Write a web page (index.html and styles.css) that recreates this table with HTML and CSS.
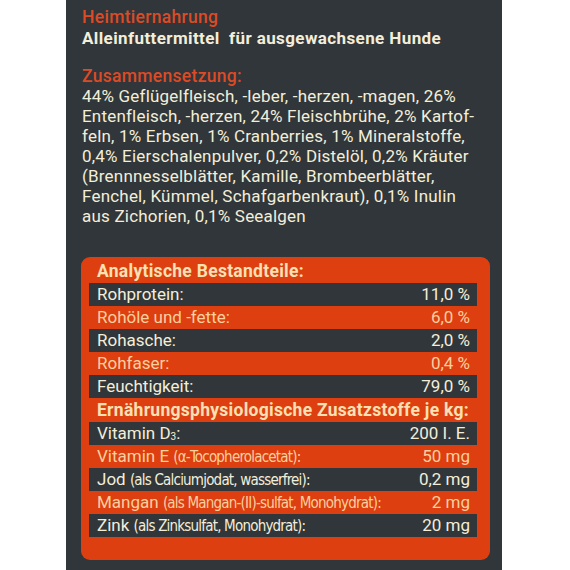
FILE: index.html
```html
<!DOCTYPE html>
<html lang="de">
<head>
    <meta charset="UTF-8">
    <title>Heimtiernahrung</title>
    <link rel="stylesheet" href="styles.css">
</head>
<body>

<div class="label">
    <p class="heading">Heimtiernahrung</p>
    <p class="subtitle">Alleinfuttermittel&nbsp; für ausgewachsene Hunde</p>

    <p class="heading section">Zusammensetzung:</p>
    <p class="ingredients">
        44% Geflügelfleisch, -leber, -herzen, -magen, 26%<br>
        Entenfleisch, -herzen, 24% Fleischbrühe, 2% Kartof-<br>
        feln, 1% Erbsen, 1% Cranberries, 1% Mineralstoffe,<br>
        0,4% Eierschalenpulver, 0,2% Distelöl, 0,2% Kräuter<br>
        (Brennnesselblätter, Kamille, Brombeerblätter,<br>
        Fenchel, Kümmel, Schafgarbenkraut), 0,1% Inulin<br>
        aus Zichorien, 0,1% Seealgen
    </p>

    <div class="analysis">
        <h2 class="analysis-title">Analytische Bestandteile:</h2>
        <div class="row dark"><span>Rohprotein:</span><span>11,0 %</span></div>
        <div class="row"><span>Rohöle und -fette:</span><span>6,0 %</span></div>
        <div class="row dark"><span>Rohasche:</span><span>2,0 %</span></div>
        <div class="row"><span>Rohfaser:</span><span>0,4 %</span></div>
        <div class="row dark"><span>Feuchtigkeit:</span><span>79,0 %</span></div>

        <h2 class="analysis-title second">Ernährungsphysiologische Zusatzstoffe je kg:</h2>
        <div class="row dark"><span>Vitamin D<sub>3</sub>:</span><span>200 I. E.</span></div>
        <div class="row"><span>Vitamin E <small>(α-Tocopherolacetat):</small></span><span>50 mg</span></div>
        <div class="row dark"><span>Jod <small>(als Calciumjodat, wasserfrei):</small></span><span>0,2 mg</span></div>
        <div class="row"><span>Mangan <small>(als Mangan-(II)-sulfat, Monohydrat):</small></span><span>2 mg</span></div>
        <div class="row dark"><span>Zink <small>(als Zinksulfat, Monohydrat):</small></span><span>20 mg</span></div>
    </div>
</div>

</body>
</html>
```

FILE: styles.css
```css
* {
    margin: 0;
    padding: 0;
    box-sizing: border-box;
}

body {
    font-family: Roboto, Arial, sans-serif;
    background-color: #fff;
}

.label {
    width: 436px;
    height: 570px;
    margin-left: 66px;
    background-color: #31363a;
    padding: 7px 0 0 16px;
    color: #f3eed9;
}

.heading {
    color: #dc4b26;
    font-size: 17.5px;
    font-weight: 500;
    line-height: 20px;
    letter-spacing: 0.3px;
}

.subtitle {
    font-size: 17px;
    font-weight: 700;
    line-height: 22px;
    letter-spacing: 0.4px;
}

.section {
    margin-top: 17px;
}

.ingredients {
    font-size: 17px;
    line-height: 20px;
    letter-spacing: 0.2px;
}

/* Analysetabelle */
.analysis {
    width: 409px;
    margin: 31px 0 0 -1px;
    background-color: #dd3f10;
    border-radius: 9px;
    padding: 3px 13px 23px 8px;
}

.analysis-title {
    color: #fbe0b4;
    font-size: 17.5px;
    font-weight: 700;
    line-height: 23px;
    letter-spacing: 0.28px;
    padding-left: 8px;
}

.analysis-title.second {
    line-height: 24px;
}

.row {
    display: flex;
    justify-content: space-between;
    align-items: baseline;
    height: 23px;
    padding: 0 7px 0 8px;
    font-size: 17px;
    line-height: 23px;
    color: #fbcf9e;
}

.row.dark {
    background-color: #31363a;
    color: #f3eed9;
}

.row small {
    font-family: "DejaVu Sans Condensed", "DejaVu Sans", sans-serif;
    font-stretch: condensed;
    font-size: 15px;
    letter-spacing: -0.8px;
}

.row sub {
    font-size: 10px;
    vertical-align: -1px;
}
```
